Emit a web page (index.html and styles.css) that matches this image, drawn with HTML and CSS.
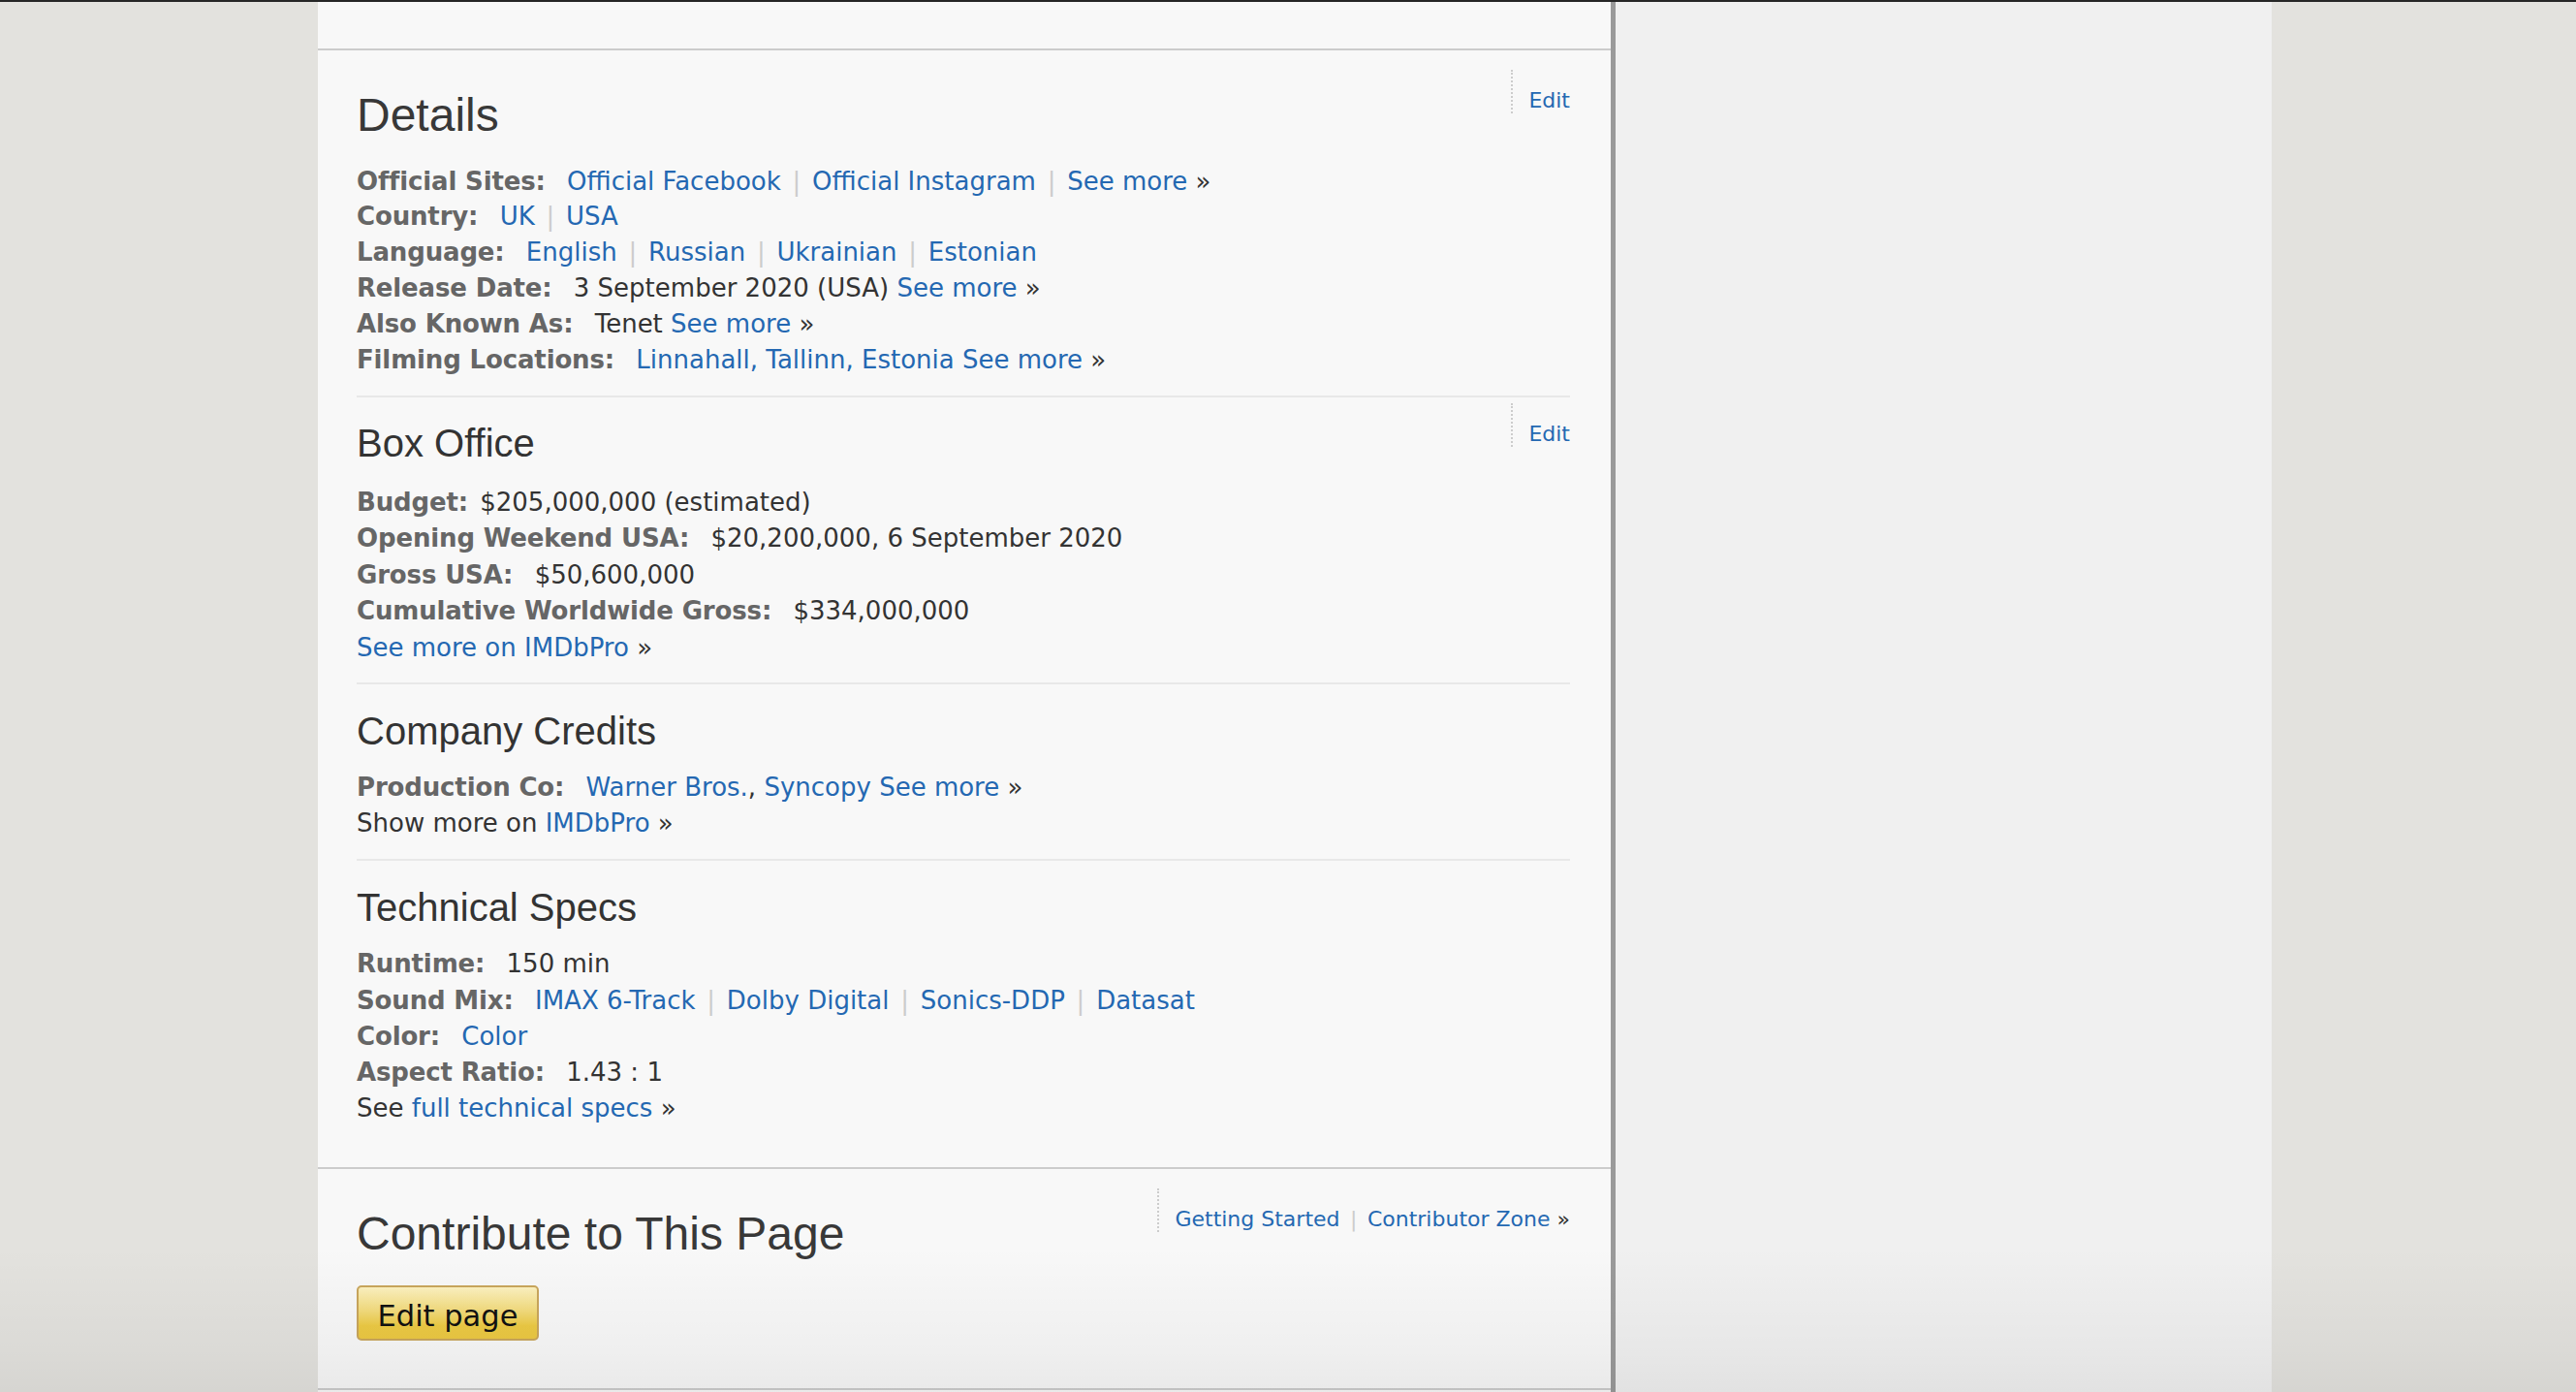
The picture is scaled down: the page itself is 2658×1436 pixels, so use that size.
FILE: index.html
```html
<!DOCTYPE html>
<html>
<head>
<meta charset="utf-8">
<title>Tenet - Details</title>
<link rel="stylesheet" href="styles.css">
</head>
<body>
<div class="topbar"></div>
<div class="layout">
  <main class="main">
    <div class="main-top"></div>
    <div class="article">
      <section class="sec sec-details">
        <div class="edit-box"><a href="#">Edit</a></div>
        <h2>Details</h2>
        <div class="row"><span class="lbl">Official Sites:</span> <a href="#">Official Facebook</a> <span class="sep">|</span> <a href="#">Official Instagram</a> <span class="sep">|</span> <a href="#">See more</a>&nbsp;<span class="raquo">»</span></div>
        <div class="row"><span class="lbl">Country:</span> <a href="#">UK</a> <span class="sep">|</span> <a href="#">USA</a></div>
        <div class="row"><span class="lbl">Language:</span> <a href="#">English</a> <span class="sep">|</span> <a href="#">Russian</a> <span class="sep">|</span> <a href="#">Ukrainian</a> <span class="sep">|</span> <a href="#">Estonian</a></div>
        <div class="row"><span class="lbl">Release Date:</span> 3 September 2020 (USA) <a href="#">See more</a>&nbsp;<span class="raquo">»</span></div>
        <div class="row"><span class="lbl">Also Known As:</span> Tenet <a href="#">See more</a>&nbsp;<span class="raquo">»</span></div>
        <div class="row"><span class="lbl">Filming Locations:</span> <a href="#">Linnahall, Tallinn, Estonia</a> <a href="#">See more</a>&nbsp;<span class="raquo">»</span></div>
      </section>
      <section class="sec sec-box">
        <div class="edit-box edit-box-tight"><a href="#">Edit</a></div>
        <h3>Box Office</h3>
        <div class="row"><span class="lbl lbl-tight">Budget:</span> $205,000,000 (estimated)</div>
        <div class="row"><span class="lbl">Opening Weekend USA:</span> $20,200,000, 6 September 2020</div>
        <div class="row"><span class="lbl">Gross USA:</span> $50,600,000</div>
        <div class="row"><span class="lbl">Cumulative Worldwide Gross:</span> $334,000,000</div>
        <div class="row"><a href="#">See more on IMDbPro</a>&nbsp;<span class="raquo">»</span></div>
      </section>
      <section class="sec sec-company">
        <h3>Company Credits</h3>
        <div class="row"><span class="lbl">Production Co:</span> <a href="#">Warner Bros.</a>, <a href="#">Syncopy</a> <a href="#">See more</a>&nbsp;<span class="raquo">»</span></div>
        <div class="row">Show more on <a href="#">IMDbPro</a>&nbsp;<span class="raquo">»</span></div>
      </section>
      <section class="sec sec-tech">
        <h3>Technical Specs</h3>
        <div class="row"><span class="lbl">Runtime:</span> 150 min</div>
        <div class="row"><span class="lbl">Sound Mix:</span> <a href="#">IMAX 6-Track</a> <span class="sep">|</span> <a href="#">Dolby Digital</a> <span class="sep">|</span> <a href="#">Sonics-DDP</a> <span class="sep">|</span> <a href="#">Datasat</a></div>
        <div class="row"><span class="lbl">Color:</span> <a href="#">Color</a></div>
        <div class="row"><span class="lbl">Aspect Ratio:</span> 1.43 : 1</div>
        <div class="row">See <a href="#">full technical specs</a>&nbsp;<span class="raquo">»</span></div>
      </section>
    </div>
    <section class="contribute">
      <div class="edit-box contrib-links"><a href="#">Getting Started</a> <span class="sep">|</span> <a href="#">Contributor Zone</a>&nbsp;<span class="raquo">»</span></div>
      <h2>Contribute to This Page</h2>
      <button class="btn-edit" type="button">Edit page</button>
    </section>
  </main>
  <aside class="sidebar"></aside>
</div>
<div class="bottom-fade"></div>
</body>
</html>
```

FILE: styles.css
```css
html, body {
  margin: 0;
  padding: 0;
}

body {
  background: #e3e2de;
  font-family: "DejaVu Sans", Verdana, sans-serif;
  font-size: 26px;
  color: #333;
  height: 1436px;
  overflow: hidden;
  position: relative;
}

a {
  color: #2468b2;
  text-decoration: none;
}

.topbar {
  height: 2px;
  background: #262626;
}

.layout {
  display: flex;
  width: 2016px;
  margin-left: 328px;
  height: 1434px;
}

.main {
  width: 1334px;
  flex: none;
  background: #f8f8f8;
  border-right: 5px solid #9a9a9a;
}

.main-top {
  height: 48px;
  border-bottom: 2px solid #cccccc;
}

.article {
  padding: 0 42px 0 40px;
  border-bottom: 2px solid #cccccc;
}

.sec {
  display: flow-root;
  border-bottom: 2px solid #e8e8e8;
}

.sec h2,
.contribute h2 {
  font-family: "Liberation Sans", Arial, sans-serif;
  font-weight: normal;
  font-size: 48px;
  line-height: 53px;
  color: #383838;
  margin: 39.9px 0 23.8px;
}

.sec h3 {
  font-family: "Liberation Sans", Arial, sans-serif;
  font-weight: normal;
  font-size: 40px;
  line-height: 45px;
  color: #333;
  margin: 24.6px 0 20.1px;
}

.row {
  line-height: 36.8px;
  white-space: nowrap;
}

.lbl {
  font-weight: bold;
  color: #666;
  letter-spacing: -0.15px;
  margin-right: 14px;
}

.lbl-tight {
  margin-right: 4px;
}

.sep {
  color: #cccccc;
  margin: 0 3.5px;
}

.raquo {
  color: #333;
}

.edit-box {
  float: right;
  margin-top: 20px;
  padding: 19px 0 0 16px;
  height: 26px;
  border-left: 2px dotted #cccccc;
  font-size: 22px;
  line-height: 26px;
}

.edit-box-tight {
  margin-top: 6px;
}

.sec-details {
  padding-bottom: 18.5px;
}

.sec-box {
  padding-bottom: 16.2px;
}

.sec-box .row {
  line-height: 37.6px;
}

.sec-company h3 {
  margin: 26px 0 17.3px;
}

.sec-company {
  padding-bottom: 18.1px;
}

.sec-tech {
  border-bottom: none;
  padding-bottom: 41px;
}

.sec-tech h3 {
  margin: 26px 0 17.5px;
}

.sec-tech .row {
  line-height: 37.3px;
}

.contribute {
  display: flow-root;
  padding: 0 42px 0 40px;
  height: 226px;
  border-bottom: 2px solid #cccccc;
}

.contribute h2 {
  margin: 40.2px 0 26.8px;
}

.btn-edit {
  display: block;
  font-family: "DejaVu Sans", Verdana, sans-serif;
  font-size: 30.5px;
  line-height: 35px;
  color: #111;
  padding: 12.4px 19.5px 5.9px;
  border: 2px solid #c9a65c;
  border-radius: 5px;
  background: linear-gradient(to bottom, #fcf1c0 0%, #f3dc7e 45%, #ecca44 75%, #ebc842 100%);
  cursor: pointer;
}

.sidebar {
  flex: 1;
  background: #f0f0f0;
}

.bottom-fade {
  position: absolute;
  left: 0;
  right: 0;
  bottom: 0;
  height: 150px;
  background: linear-gradient(to bottom, rgba(0, 0, 0, 0) 0%, rgba(0, 0, 0, 0.035) 70%, rgba(0, 0, 0, 0.06) 100%);
  pointer-events: none;
}
```
